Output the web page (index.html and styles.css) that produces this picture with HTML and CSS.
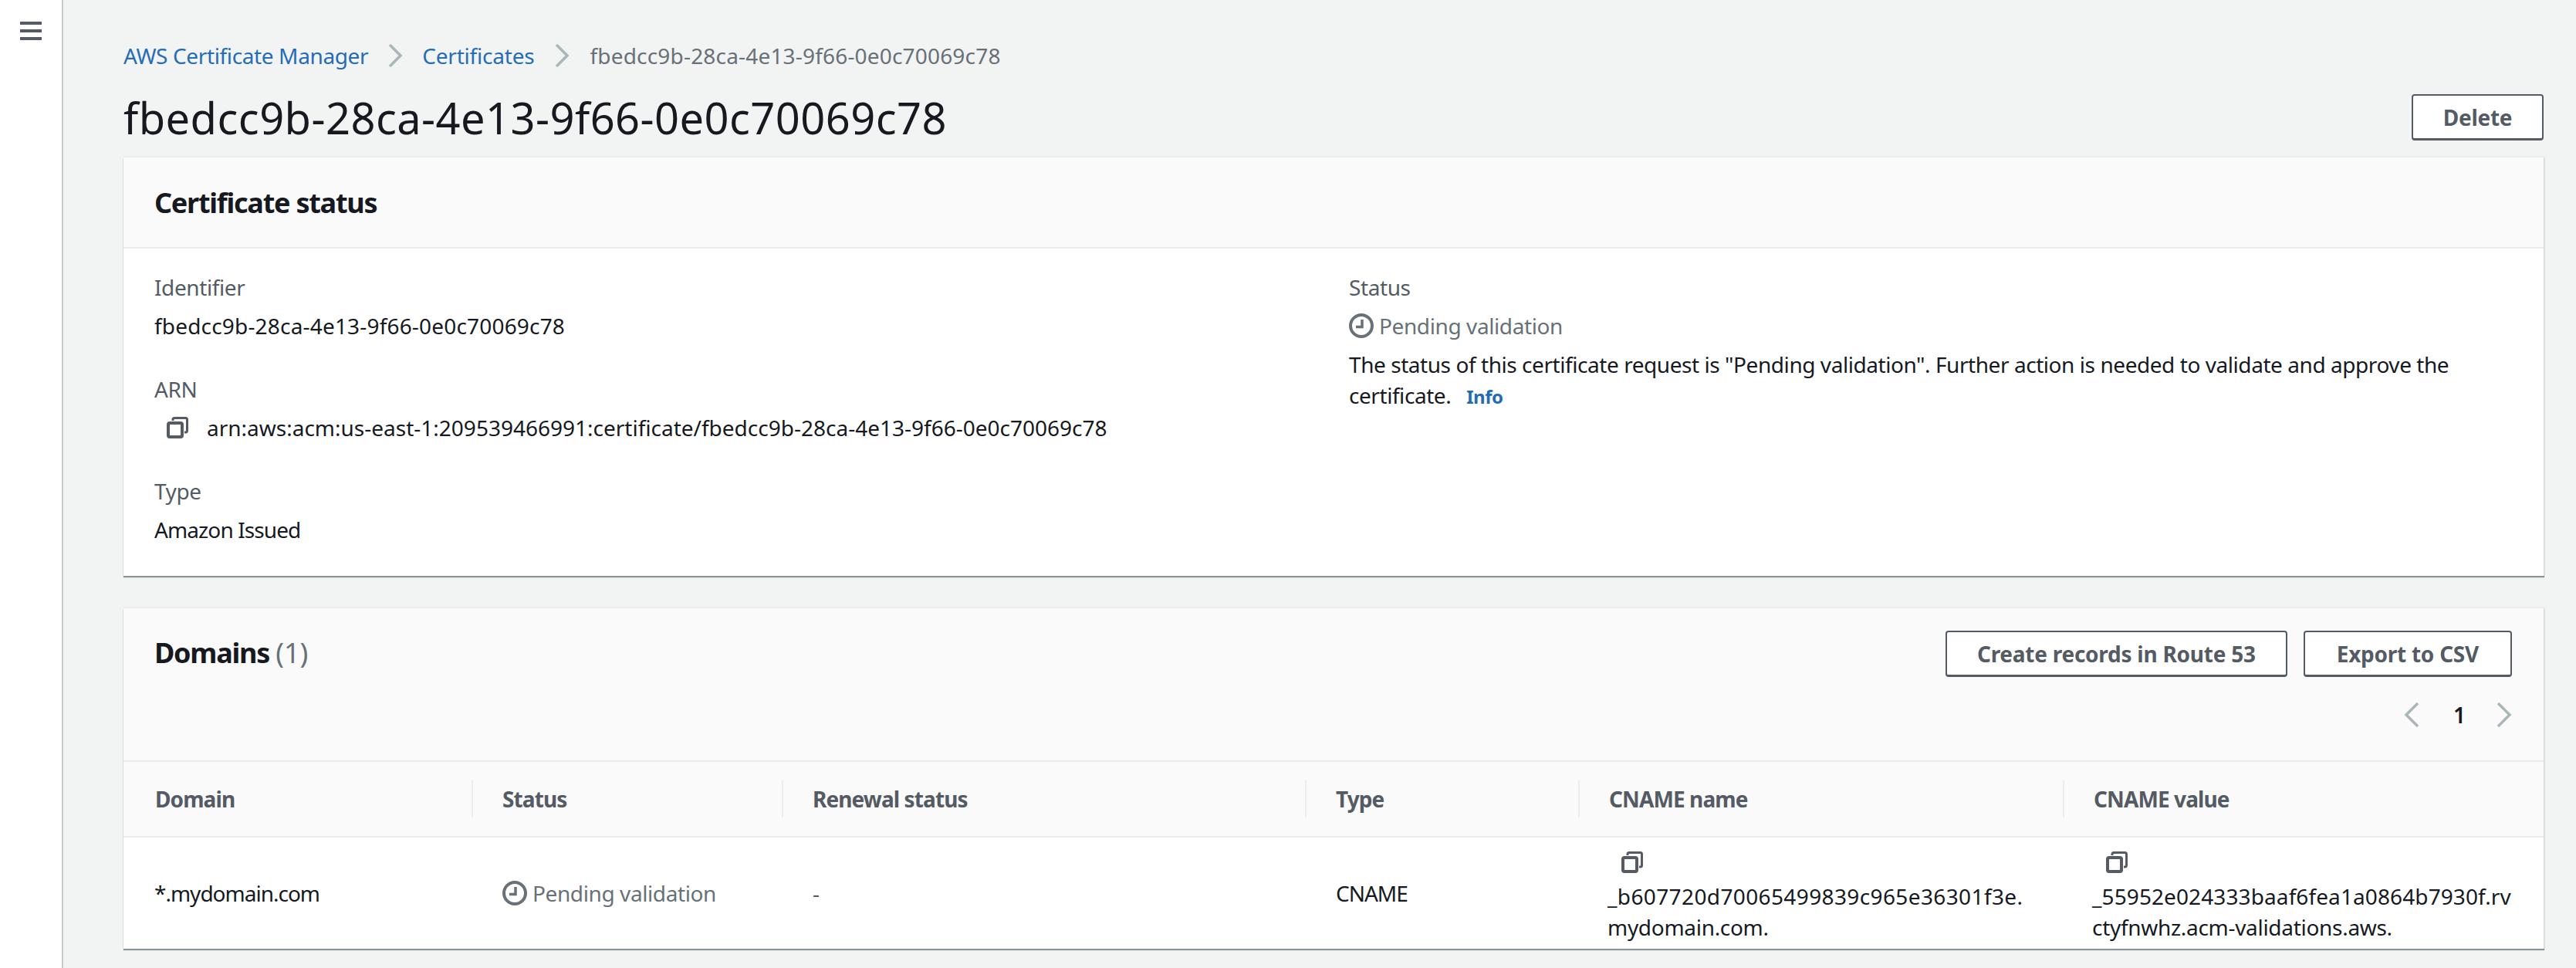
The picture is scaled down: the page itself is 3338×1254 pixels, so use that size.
FILE: index.html
```html
<!DOCTYPE html>
<html lang="en">
<head>
<meta charset="utf-8">
<title>Certificate</title>
<link rel="stylesheet" href="styles.css">
</head>
<body>
<div class="layout">
  <aside class="rail">
    <svg class="burger" width="28" height="24" viewBox="0 0 28 24"><path d="M0 2h28M0 12h28M0 22h28" stroke="#545b64" stroke-width="4"/></svg>
  </aside>
  <main class="main">
    <nav class="crumbs">
      <a class="link link-long">AWS Certificate Manager</a>
      <svg class="chev" width="20" height="30" viewBox="0 0 20 30"><path d="M3 1l14 14L3 29" fill="none" stroke="#aab7b8" stroke-width="3.5"/></svg>
      <a class="link">Certificates</a>
      <svg class="chev" width="20" height="30" viewBox="0 0 20 30"><path d="M3 1l14 14L3 29" fill="none" stroke="#aab7b8" stroke-width="3.5"/></svg>
      <span class="current">fbedcc9b-28ca-4e13-9f66-0e0c70069c78</span>
    </nav>
    <div class="titlebar">
      <h1 class="title">fbedcc9b-28ca-4e13-9f66-0e0c70069c78</h1>
      <button class="btn">Delete</button>
    </div>

    <section class="card">
      <header class="card-head"><h2 class="card-title">Certificate status</h2></header>
      <div class="details">
        <div class="col">
          <div class="field">
            <div class="label">Identifier</div>
            <div class="value value-id">fbedcc9b-28ca-4e13-9f66-0e0c70069c78</div>
          </div>
          <div class="field">
            <div class="label">ARN</div>
            <div class="value arn">
              <svg class="copy" width="28" height="28" viewBox="0 0 28 28"><path d="M8 5V3.500a2 2 0 0 1 2-2h14.500a2 2 0 0 1 2 2V18a2 2 0 0 1-2 2H23" fill="none" stroke="#545b64" stroke-width="3"/><rect x="2" y="8" width="18" height="18" rx="2" fill="none" stroke="#545b64" stroke-width="4"/></svg>
              <span>arn:aws:acm:us-east-1:209539466991:certificate/fbedcc9b-28ca-4e13-9f66-0e0c70069c78</span>
            </div>
          </div>
          <div class="field">
            <div class="label">Type</div>
            <div class="value value-text">Amazon Issued</div>
          </div>
        </div>
        <div class="col">
          <div class="field">
            <div class="label">Status</div>
            <div class="pending">
              <svg class="clock" width="32" height="32" viewBox="0 0 32 32"><circle cx="16" cy="16" r="14" fill="none" stroke="#687078" stroke-width="4"/><path d="M17 8v9.500H9" fill="none" stroke="#687078" stroke-width="3.500"/></svg>
              <span>Pending validation</span>
            </div>
            <p class="desc">The status of this certificate request is "Pending validation". Further action is needed to validate and approve the certificate.<a class="info">Info</a></p>
          </div>
        </div>
      </div>
    </section>

    <section class="card card-domains">
      <header class="domains-head">
        <div class="domains-top">
          <h2 class="card-title">Domains <span class="count">(1)</span></h2>
          <div class="actions">
            <button class="btn">Create records in Route 53</button>
            <button class="btn btn-export">Export to CSV</button>
          </div>
        </div>
        <div class="pager">
          <svg class="pager-prev" width="20" height="32" viewBox="0 0 20 32"><path d="M18 1L3 16l15 15" fill="none" stroke="#aab7b8" stroke-width="3.500"/></svg>
          <span class="page">1</span>
          <svg width="20" height="32" viewBox="0 0 20 32"><path d="M2 1l15 15L2 31" fill="none" stroke="#aab7b8" stroke-width="3.500"/></svg>
        </div>
      </header>
      <div class="table">
        <div class="th th-first"><span class="th-in">Domain</span></div>
        <div class="th"><span class="th-in">Status</span></div>
        <div class="th"><span class="th-in">Renewal status</span></div>
        <div class="th"><span class="th-in">Type</span></div>
        <div class="th"><span class="th-in">CNAME name</span></div>
        <div class="th"><span class="th-in">CNAME value</span></div>
        <div class="td td-text">*.mydomain.com</div>
        <div class="td">
          <div class="pending">
            <svg class="clock" width="32" height="32" viewBox="0 0 32 32"><circle cx="16" cy="16" r="14" fill="none" stroke="#687078" stroke-width="4"/><path d="M17 8v9.500H9" fill="none" stroke="#687078" stroke-width="3.500"/></svg>
            <span>Pending validation</span>
          </div>
        </div>
        <div class="td dim">-</div>
        <div class="td td-text">CNAME</div>
        <div class="td td-cname">
          <svg class="copy copy-cell" width="28" height="28" viewBox="0 0 28 28"><path d="M8 5V3.500a2 2 0 0 1 2-2h14.500a2 2 0 0 1 2 2V18a2 2 0 0 1-2 2H23" fill="none" stroke="#545b64" stroke-width="3"/><rect x="2" y="8" width="18" height="18" rx="2" fill="none" stroke="#545b64" stroke-width="4"/></svg>
          <div class="cname cname-name">_b607720d70065499839c965e36301f3e.<br><span class="cname-rest">mydomain.com.</span></div>
        </div>
        <div class="td td-cname">
          <svg class="copy copy-cell" width="28" height="28" viewBox="0 0 28 28"><path d="M8 5V3.500a2 2 0 0 1 2-2h14.500a2 2 0 0 1 2 2V18a2 2 0 0 1-2 2H23" fill="none" stroke="#545b64" stroke-width="3"/><rect x="2" y="8" width="18" height="18" rx="2" fill="none" stroke="#545b64" stroke-width="4"/></svg>
          <div class="cname cname-value">_55952e024333baaf6fea1a0864b7930f.rv<br><span class="cname-rest">ctyfnwhz.acm-validations.aws.</span></div>
        </div>
      </div>
    </section>
  </main>
</div>
</body>
</html>
```
FILE: styles.css
```css
* { box-sizing: border-box; }
html, body { margin: 0; height: 100%; overflow: hidden; }
body {
  background: #f2f3f3;
  color: #16191f;
  font-family: "Noto Sans", "Open Sans", sans-serif;
  font-size: 28px;
  line-height: 40px;
}
.layout { display: flex; height: 1254px; }
.rail {
  width: 82px;
  flex: none;
  background: #fff;
  border-right: 2px solid #c6c9ca;
  padding: 28px 0 0 26px;
}
.burger { display: block; }
.main { width: 3137px; margin-left: 78px; flex: none; }
.crumbs {
  display: flex;
  align-items: center;
  height: 40px;
  margin-top: 52px;
  gap: 23px;
}
.link { color: #266db5; letter-spacing: -0.2px; }
.link-long { letter-spacing: -0.37px; }
.chev { margin: 0 2px; }
.current { color: #687078; margin-left: 2px; letter-spacing: 0.18px; }
.titlebar {
  display: flex;
  justify-content: space-between;
  align-items: flex-start;
  margin-top: 20px;
  height: 92px;
}
.title {
  margin: 0;
  font-size: 56px;
  line-height: 80px;
  font-weight: 400;
  letter-spacing: 0.44px;
}
.btn {
  font: inherit;
  font-weight: 700;
  color: #545b64;
  background: #fff;
  border: 2px solid #545b64;
  border-width: 2px 2px 3px;
  border-radius: 4px;
  height: 60px;
  padding: 0 39px;
  line-height: 1;
  margin: 0;
  letter-spacing: -0.25px;
}
.btn-export { padding: 0 41px; }
.titlebar .btn { margin-top: 10px; margin-right: 1px; width: 171px; padding: 0; }
.card {
  background: #fff;
  box-shadow: 0 2px 1px #879596, 0 -1px 2px #e5e7e7;
  border-right: 1px solid #d5dbdb;
}
.card-head {
  height: 118px;
  background: #fafafa;
  border-bottom: 2px solid #eaeded;
  padding: 37px 40px 0;
}
.card-title {
  margin: 0;
  font-size: 36px;
  line-height: 44px;
  font-weight: 700;
  letter-spacing: -1.25px;
}
.count { color: #687078; font-weight: 400; letter-spacing: 0; }
.details {
  display: grid;
  grid-template-columns: 1fr 1fr;
  gap: 40px;
  padding: 30px 40px 0;
  height: 424px;
}
.field { margin-bottom: 42px; }
.label { color: #545b64; height: 50px; letter-spacing: -0.4px; }
.value { height: 40px; }
.value-id { letter-spacing: 0.18px; }
.value-text { letter-spacing: -0.9px; }
.arn { display: flex; align-items: center; gap: 24px; padding-left: 16px; }
.copy { flex: none; }
.pending {
  display: flex;
  align-items: center;
  gap: 7px;
  color: #687078;
  height: 40px;
  letter-spacing: -0.4px;
}
.desc { margin: 10px 0 0; letter-spacing: -0.44px; }
.info { color: #1f6cb5; font-weight: 700; font-size: 24px; margin-left: 20px; letter-spacing: -0.5px; }
.card-domains { margin-top: 42px; }
.domains-head {
  height: 199px;
  background: #fafafa;
  border-bottom: 2px solid #eaeded;
  padding: 29px 41px 0 40px;
}
.domains-top { display: flex; justify-content: space-between; align-items: flex-start; }
.domains-top .card-title { margin-top: 7px; }
.actions { display: flex; gap: 21px; }
.pager {
  display: flex;
  justify-content: flex-end;
  align-items: center;
  gap: 40px;
  margin-top: 29px;
  height: 40px;
}
.pager-prev { margin-right: 4px; }
.page { font-weight: 600; color: #16191f; }
.table {
  display: grid;
  grid-template-columns: 451px 402px 678px 354px 628px 1fr;
  grid-template-rows: 98px 144px;
}
.th {
  background: #fafafa;
  border-bottom: 2px solid #eaeded;
  font-weight: 700;
  color: #545b64;
  display: flex;
  align-items: center;
  padding: 0 0 0 40px;
  position: relative;
  letter-spacing: -0.9px;
}
.th + .th::before {
  content: "";
  position: absolute;
  left: 0;
  top: 24px;
  height: 48px;
  width: 2px;
  background: #eaeded;
}
.th-first { padding-left: 41px; }
.td {
  display: flex;
  align-items: center;
  padding: 0 0 0 40px;
}
.td-text { letter-spacing: -1px; }
.dim { color: #545b64; }
.td-cname {
  display: block;
  padding: 18px 0 0 38px;
  line-height: 40px;
}
.copy-cell { display: block; margin: 0 0 10px 18px; }
.cname { white-space: nowrap; }
.cname-name { letter-spacing: 0.38px; }
.cname-value { letter-spacing: 0.1px; }
.cname-rest { letter-spacing: -0.3px; }
```
